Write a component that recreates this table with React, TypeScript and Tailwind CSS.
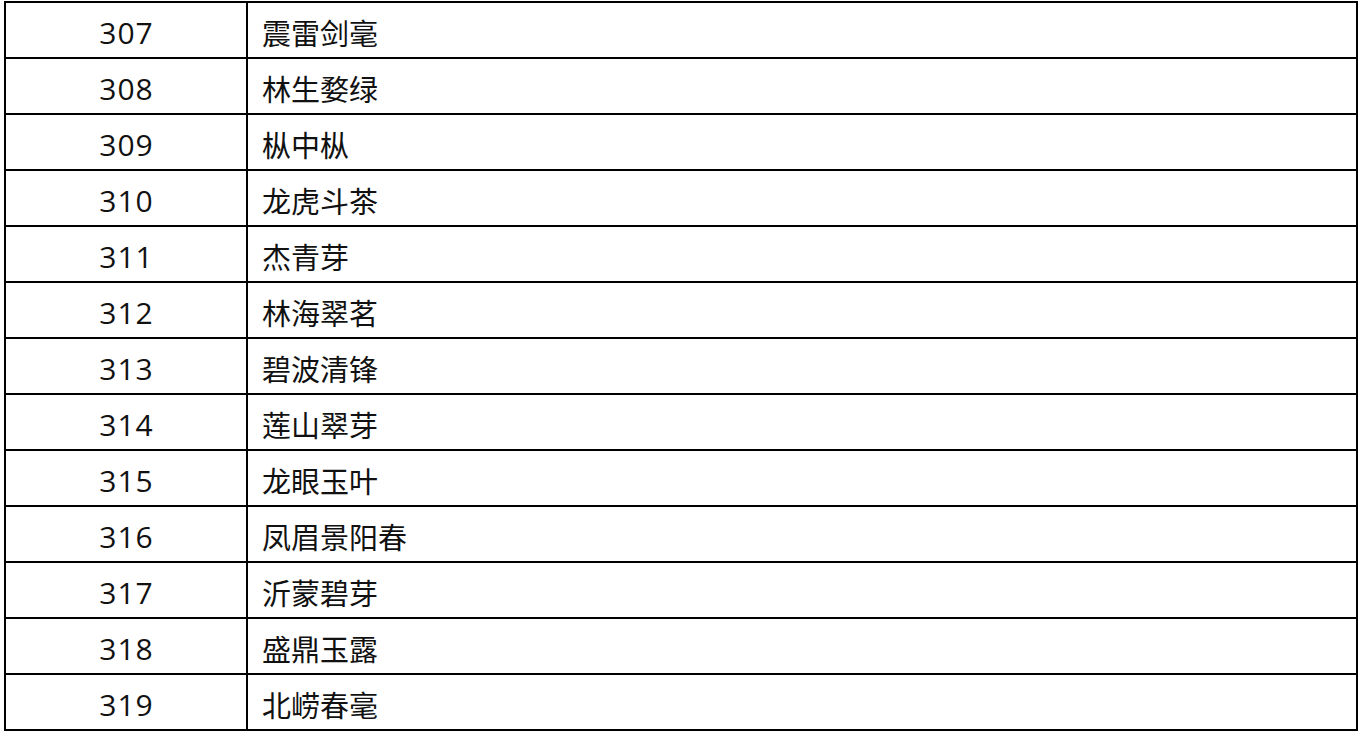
import React from "react";

const rows: [string, string][] = [
  ["307", "震雷剑毫"],
  ["308", "林生婺绿"],
  ["309", "枞中枞"],
  ["310", "龙虎斗茶"],
  ["311", "杰青芽"],
  ["312", "林海翠茗"],
  ["313", "碧波清锋"],
  ["314", "莲山翠芽"],
  ["315", "龙眼玉叶"],
  ["316", "凤眉景阳春"],
  ["317", "沂蒙碧芽"],
  ["318", "盛鼎玉露"],
  ["319", "北崂春毫"],
];

export default function App() {
  return (
    <div className="w-[1366px] h-[740px] bg-white overflow-hidden pt-[1px] pl-[4px]">
      <div className="w-[1354px] border-l-2 border-r-2 border-b-2 border-black">
        {rows.map(([num, name]) => (
          <div key={num} className="flex h-[56px] border-t-2 border-black">
            <div
              className="w-[242px] shrink-0 border-r-2 border-black flex items-center justify-center pt-[5px] pl-[1px] text-[30px] tracking-[1px] text-[#111]"
              style={{ fontFamily: '"Open Sans", "Noto Sans CJK SC", sans-serif' }}
            >
              {num}
            </div>
            <div
              className="flex-1 flex items-center pl-[14px] pt-[5px] text-[29px] text-[#111]"
              style={{ fontFamily: '"Noto Sans CJK SC", sans-serif' }}
            >
              {name}
            </div>
          </div>
        ))}
      </div>
    </div>
  );
}
